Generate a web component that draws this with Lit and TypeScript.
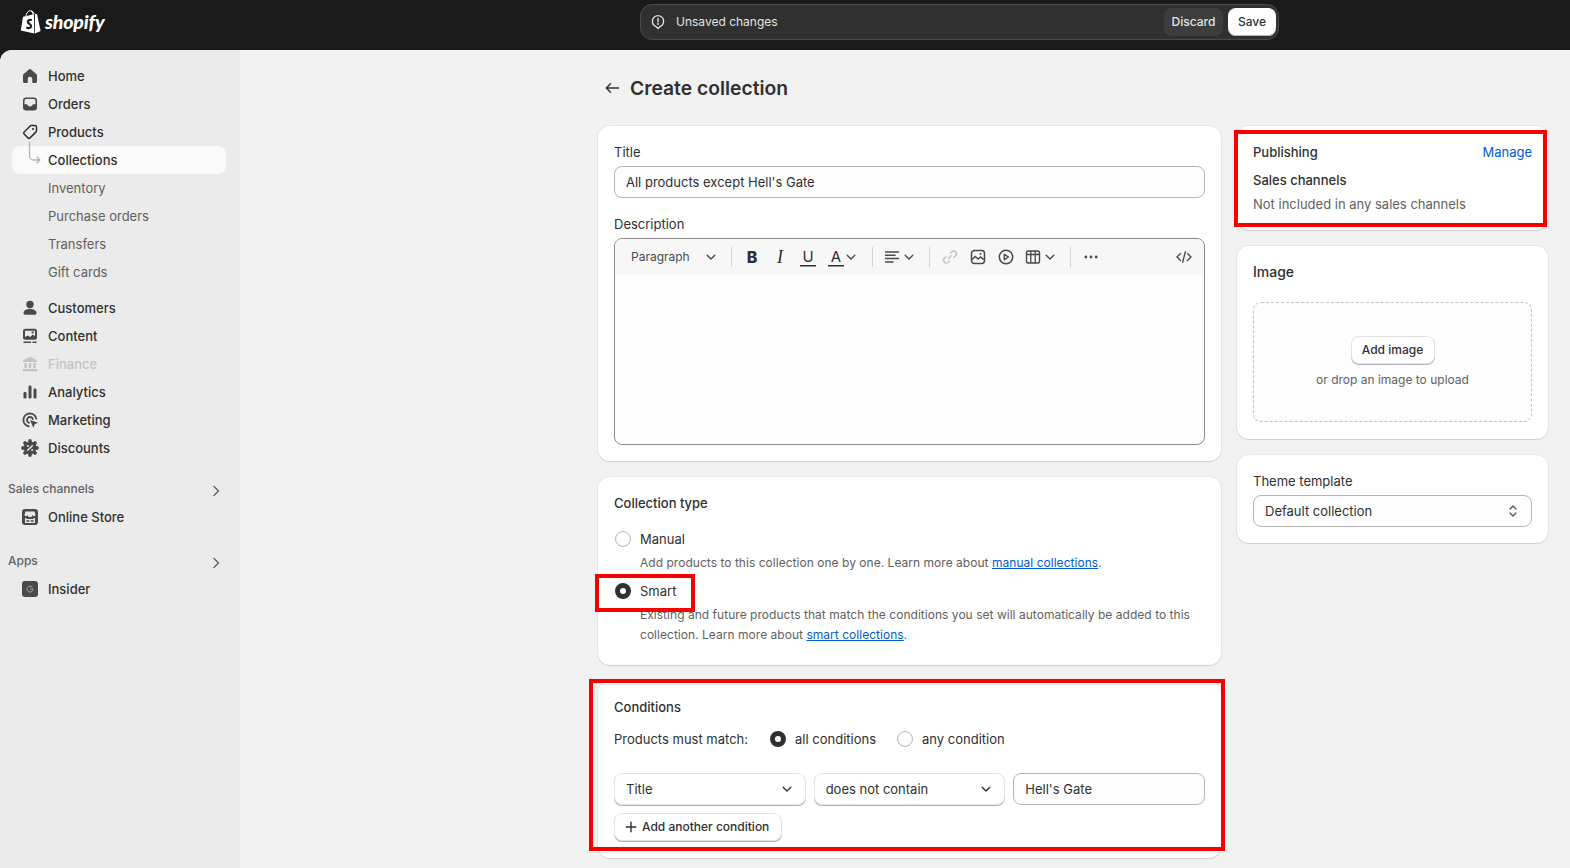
import { LitElement, css, html, svg } from 'lit';
import { customElement } from 'lit/decorators.js';

const icon = (body: unknown, size = 20) => html`<svg class="ico" width=${size} height=${size} viewBox="0 0 20 20">${body}</svg>`;

const chevronDown = html`<svg class="chev" width="14" height="14" viewBox="0 0 14 14"><path d="M3.2 5.2 7 9l3.8-3.8" fill="none" stroke="currentColor" stroke-width="1.4" stroke-linecap="round" stroke-linejoin="round"/></svg>`;
const chevronRight = html`<svg width="16" height="16" viewBox="0 0 16 16"><path d="M6 3.5 10.5 8 6 12.5" fill="none" stroke="#616161" stroke-width="1.4" stroke-linecap="round" stroke-linejoin="round"/></svg>`;

// knobs round the discount badge
const badgeKnobs = [0, 45, 90, 135, 180, 225, 270, 315].map((deg) => svg`<circle cx="10" cy="3" r="1.900" fill="currentColor" transform="rotate(${deg} 10 10)"/>`);

const navIcons: Record<string, unknown> = {
  home: svg`<path fill="currentColor" d="M9.2 3.3a1.2 1.2 0 0 1 1.6 0l5.5 4.7c.45.35.7.9.7 1.45v6.05a1.5 1.5 0 0 1-1.5 1.5H13a.75.75 0 0 1-.75-.75V13a2.25 2.25 0 0 0-4.5 0v3.25A.75.75 0 0 1 7 17H4.500A1.500 1.500 0 0 1 3 15.500V9.450c0-.55.25-1.100.7-1.450z"/>`,
  orders: svg`<rect x="3.75" y="4.25" width="12.5" height="11.500" rx="2.500" fill="none" stroke="currentColor" stroke-width="1.500"/><path fill="currentColor" d="M3.500 10.200h3.700c.3 1.500 1.400 2.200 2.800 2.200s2.500-.7 2.800-2.200h3.700v3.300a2.500 2.500 0 0 1-2.500 2.500H6a2.500 2.500 0 0 1-2.500-2.500z"/>`,
  products: svg`<path fill="none" stroke="#303030" stroke-width="1.500" stroke-linejoin="round" d="M11.200 3.500H15A1.500 1.500 0 0 1 16.500 5v3.800c0 .4-.16.78-.44 1.060l-6 6a1.500 1.500 0 0 1-2.120 0l-3.800-3.800a1.500 1.500 0 0 1 0-2.120l6-6c.28-.28.66-.44 1.060-.44z"/><circle cx="13" cy="7" r="1.100" fill="#303030"/>`,
  customers: svg`<circle cx="10" cy="6.500" r="3.700" fill="currentColor"/><path fill="currentColor" d="M3.500 15c0-2.500 2.900-4 6.500-4s6.500 1.500 6.500 4c0 1-.8 1.750-1.500 1.750H5c-.7 0-1.500-.75-1.500-1.750z"/>`,
  content: svg`<rect x="3" y="2.800" width="14" height="11" rx="2.200" fill="currentColor"/><path fill="#ebebeb" d="M5 4.800h10v5.400l-2.200-1.700-2.600 2.500-2.400-1.600L5 11z"/><circle cx="12.600" cy="6.400" r="1.100" fill="currentColor"/><path d="M4 16.200h6.500M13 16.200h3" stroke="currentColor" stroke-width="1.500" stroke-linecap="round"/>`,
  finance: svg`<path fill="currentColor" d="M10 2.800l7 3.500V8H3V6.300zM4.300 9h2.400v5H4.300zM8.800 9h2.400v5H8.800zM13.300 9h2.400v5h-2.400zM3 15h14v2.200H3z"/>`,
  analytics: svg`<g fill="currentColor"><rect x="3.500" y="10" width="3" height="6.500" rx="1.200"/><rect x="8.500" y="3.500" width="3" height="13" rx="1.200"/><rect x="13.500" y="6.500" width="3" height="10" rx="1.200"/></g>`,
  marketing: svg`<g fill="none" stroke="currentColor" stroke-width="1.900" stroke-linecap="round"><path d="M16.300 8.600A6.500 6.500 0 1 0 8.600 16.300"/><path d="M12.800 9A3 3 0 1 0 9 12.800"/></g><path fill="currentColor" d="M10 10l8 2.800-3.300 1.400-1.400 3.500z"/>`,
  discounts: svg`${badgeKnobs}<circle cx="10" cy="10" r="6.400" fill="currentColor"/><path d="M12.300 7.700l-4.600 4.600" stroke="#ebebeb" stroke-width="1.400" stroke-linecap="round"/><circle cx="7.900" cy="8" r="1" fill="#ebebeb"/><circle cx="12.100" cy="12" r="1" fill="#ebebeb"/>`,
  store: svg`<rect x="2" y="2" width="16" height="16" rx="3.200" fill="currentColor"/><path fill="#ebebeb" d="M5.500 4.500h9l1 3.200a1.700 1.700 0 0 1-3.300.4 1.700 1.700 0 0 1-4.400 0 1.700 1.700 0 0 1-3.300-.4z"/><path fill="none" stroke="#ebebeb" stroke-width="1.300" d="M5.700 11v4.400h8.600V11M5.700 12.700h8.600M10 12.700v2.700"/>`,
  insider: svg`<rect x="2" y="2" width="16" height="16" rx="3" fill="currentColor"/><path fill="none" stroke="#b0b0b0" stroke-width=".9" d="M12.300 8.200A3 3 0 1 0 13 10h-3"/>`,
};

const tool = {
  image: svg`<rect x="3.500" y="3.500" width="13" height="13" rx="3" fill="none" stroke="currentColor" stroke-width="1.500"/><path d="M4 12.500l3.200-3 3 2.600 2.300-2.100 3.300 2.600" fill="none" stroke="currentColor" stroke-width="1.500"/><circle cx="12.500" cy="7" r="1" fill="currentColor"/>`,
  play: svg`<circle cx="10" cy="10" r="6.700" fill="none" stroke="currentColor" stroke-width="1.500"/><path d="M8.300 7.300v5.400l4.200-2.700z" fill="none" stroke="currentColor" stroke-width="1.400" stroke-linejoin="round"/>`,
  table: svg`<rect x="3.500" y="4" width="13" height="12" rx="1.800" fill="none" stroke="currentColor" stroke-width="1.400"/><path d="M3.500 7.500h13M7.800 4v12M12.200 4v12" stroke="currentColor" stroke-width="1.300" fill="none"/>`,
  align: svg`<path d="M3.500 5h13M3.500 8.300h9.500M3.500 11.600h13M3.500 15h7.500" stroke="currentColor" stroke-width="1.500" stroke-linecap="round" fill="none"/>`,
  link: svg`<g fill="none" stroke="#c4c4c4" stroke-width="1.500" stroke-linecap="round"><path d="M8.500 11.500 11.500 8.500"/><path d="M10.500 6l1.500-1.500a2.800 2.800 0 0 1 3.900 3.900L14 10.200"/><path d="M9.500 14l-1.500 1.500a2.800 2.800 0 0 1-3.900-3.900L6 9.800"/></g>`,
  dots: svg`<g fill="currentColor"><circle cx="4.800" cy="10" r="1.400"/><circle cx="10" cy="10" r="1.400"/><circle cx="15.200" cy="10" r="1.400"/></g>`,
  code: svg`<path d="M6.500 6.500 3 10l3.500 3.500M13.500 6.500 17 10l-3.500 3.500M11.300 4.800l-2.600 10.400" fill="none" stroke="currentColor" stroke-width="1.400" stroke-linecap="round" stroke-linejoin="round"/>`,
};

type NavItem = { label: string; icon?: string; cls?: string };

const mainNav: NavItem[] = [
  { label: 'Home', icon: 'home' },
  { label: 'Orders', icon: 'orders' },
  { label: 'Products', icon: 'products' },
  { label: 'Collections', cls: 'active' },
  { label: 'Inventory', cls: 'sub' },
  { label: 'Purchase orders', cls: 'sub' },
  { label: 'Transfers', cls: 'sub' },
  { label: 'Gift cards', cls: 'sub' },
];

const secondNav: NavItem[] = [
  { label: 'Customers', icon: 'customers' },
  { label: 'Content', icon: 'content' },
  { label: 'Finance', icon: 'finance', cls: 'off' },
  { label: 'Analytics', icon: 'analytics' },
  { label: 'Marketing', icon: 'marketing' },
  { label: 'Discounts', icon: 'discounts' },
];

@customElement('app-root')
export class AppRoot extends LitElement {
  static styles = css`
    :host {
      display: block;
      height: 868px;
      overflow: hidden;
      background: #1a1a1a;
      font-family: Inter, 'Noto Sans', sans-serif;
      font-size: 13px;
      line-height: 20px;
      font-weight: 430;
      color: #303030;
    }

    .topbar {
      display: grid;
      grid-template-columns: 640px 639px 1fr;
      height: 50px;
      align-items: start;
    }

    .logo {
      display: flex;
      align-items: center;
      gap: 4px;
      padding: 10px 0 0 20px;
      color: #fff;
    }

    .wordmark {
      font-family: Lato, sans-serif;
      font-style: italic;
      font-weight: 900;
      font-size: 19.5px;
      line-height: 24px;
      letter-spacing: -0.15px;
      margin-top: -1px;
    }

    .savebar {
      display: flex;
      align-items: center;
      height: 36px;
      box-sizing: border-box;
      margin-top: 4px;
      padding: 0 2px 0 9px;
      background: #303030;
      border: 1px solid #4a4a4a;
      border-radius: 12px;
      color: #e3e3e3;
      font-size: 12px;
    }

    .savebar .msg {
      margin-left: 10px;
      flex: 1;
    }

    .discard,
    .save {
      height: 28px;
      display: flex;
      align-items: center;
      justify-content: center;
      border-radius: 8px;
      font-weight: 500;
    }

    .discard {
      width: 59px;
      background: #3d3d3d;
      margin-right: 5px;
    }

    .save {
      width: 48px;
      background: #fff;
      color: #303030;
      box-shadow: inset 0 -1px 0 #b5b5b5;
    }

    .frame {
      display: flex;
      height: 818px;
      background: #f1f1f1;
      border-radius: 12px 0 0 0;
      overflow: hidden;
    }

    .sidebar {
      width: 240px;
      flex: none;
      box-sizing: border-box;
      padding-top: 12px;
      background: #ebebeb;
    }

    .group {
      margin-bottom: 8px;
    }

    .row {
      position: relative;
      display: flex;
      align-items: center;
      gap: 8px;
      height: 28px;
      width: 214px;
      margin-left: 12px;
      padding-left: 8px;
      box-sizing: border-box;
      border-radius: 8px;
      font-weight: 450;
      color: #303030;
    }

    .row .ico {
      color: #4a4a4a;
      flex: none;
    }

    .row.sub span,
    .row.active span {
      margin-left: 28px;
    }

    .row.sub {
      color: #616161;
      font-weight: 430;
    }

    .row.active {
      background: #fafafa;
      font-weight: 550;
    }

    .row.off {
      color: #c4c4c4;
    }

    .row.off .ico {
      color: #c4c4c4;
    }

    .connector {
      position: absolute;
      left: 0;
      top: -6px;
    }

    .section {
      display: flex;
      align-items: center;
      justify-content: space-between;
      height: 28px;
      padding: 0 16px 0 8px;
      font-size: 12px;
      font-weight: 500;
      color: #616161;
    }

    .section svg {
      margin-top: 4px;
    }

    .spaced {
      margin-top: 13px;
    }

    .spaced-more {
      margin-top: 16px;
    }

    .main {
      flex: 1;
      padding: 20px 0 0 358px;
    }

    .heading {
      display: flex;
      align-items: center;
      height: 36px;
      gap: 10px;
      margin-bottom: 20px;
      font-size: 19.300px;
      font-weight: 600;
      line-height: 24px;
    }

    .heading svg {
      margin-left: 6px;
    }

    .columns {
      display: flex;
      gap: 16px;
      align-items: flex-start;
    }

    .col-left {
      width: 623px;
      display: grid;
      gap: 16px;
    }

    .col-right {
      width: 311px;
      display: grid;
      gap: 16px;
    }

    .card {
      position: relative;
      background: #fff;
      border-radius: 12px;
      padding: 16px;
      box-shadow: 0 1px 1px rgba(0, 0, 0, 0.1), 0 0 0 1px rgba(0, 0, 0, 0.04);
    }

    .mark {
      position: absolute;
      box-sizing: border-box;
      border: 4px solid #f60000;
      pointer-events: none;
    }

    .mark-publishing {
      left: -3px;
      right: 1px;
      top: 4px;
      bottom: 3px;
    }

    .mark-smart {
      left: -3px;
      top: 97px;
      width: 100px;
      height: 38px;
    }

    .mark-conditions {
      left: -9px;
      right: -4px;
      top: -2px;
      bottom: 7px;
    }

    .title {
      font-weight: 550;
    }

    .big-title {
      font-size: 14px;
      font-weight: 500;
    }

    .muted {
      color: #616161;
    }

    .label {
      margin-bottom: 4px;
    }

    .field {
      display: flex;
      align-items: center;
      height: 32px;
      box-sizing: border-box;
      padding: 0 11px;
      background: #fdfdfd;
      border: 1px solid #b5b5b5;
      border-radius: 8px;
    }

    .between {
      justify-content: space-between;
    }

    .mt16 {
      margin-top: 16px;
    }

    .editor {
      height: 207px;
      box-sizing: border-box;
      border: 1px solid #8a8a8a;
      border-radius: 8px;
      overflow: hidden;
      background: #fdfdfd;
    }

    .toolbar {
      display: flex;
      align-items: center;
      height: 36px;
      padding: 0 6px 0 8px;
      background: #f7f7f7;
      color: #4a4a4a;
    }

    .para {
      width: 103px;
      height: 28px;
      box-sizing: border-box;
      display: flex;
      align-items: center;
      justify-content: space-between;
      padding: 0 8px;
      font-size: 12px;
      color: #4a4a4a;
    }

    .sep {
      width: 1px;
      height: 20px;
      margin: 0 6px;
      background: #d4d4d4;
      flex: none;
    }

    .sep.first {
      margin-left: 5px;
    }

    .tb {
      width: 28px;
      height: 28px;
      display: flex;
      align-items: center;
      justify-content: center;
      flex: none;
    }

    .tb.wide {
      width: 44px;
      justify-content: flex-start;
      box-sizing: border-box;
    }

    .pad3 {
      padding-left: 3px;
    }

    .pad6 {
      padding-left: 6px;
    }

    .code {
      margin-left: auto;
    }

    .glyph {
      width: 16px;
      text-align: center;
      font-size: 16px;
      line-height: 16px;
      color: #303030;
    }

    .glyph.b {
      font-weight: 800;
    }

    .glyph.i {
      font-family: 'Liberation Serif', serif;
      font-style: italic;
      font-size: 18px;
    }

    .glyph.u,
    .glyph.a {
      font-size: 15px;
      box-shadow: 0 1.500px 0 #303030;
      font-weight: 400;
    }

    .radio-row {
      display: flex;
      align-items: center;
      gap: 9px;
      height: 20px;
    }

    .radio {
      width: 16px;
      height: 16px;
      margin-left: 1px;
      box-sizing: border-box;
      flex: none;
      border-radius: 50%;
      border: 1px solid #b5b5b5;
      background: #fdfdfd;
    }

    .radio.on {
      border: 5px solid #303030;
      background: #fff;
    }

    .help {
      padding-left: 26px;
      color: #616161;
      margin-top: 4px;
      font-size: 12px;
      letter-spacing: 0.03px;
    }

    .help a {
      color: #005bd3;
      text-decoration: underline;
    }

    .type-card {
      padding-bottom: 20px;
    }

    .cond-card {
      padding-bottom: 17px;
    }

    .match {
      display: flex;
      align-items: center;
      height: 20px;
      margin-top: 12px;
      gap: 20px;
    }

    .match > span {
      margin-right: 1px;
    }

    .cond-row {
      display: grid;
      grid-template-columns: repeat(3, 1fr);
      gap: 8px;
      margin-top: 24px;
    }

    .select {
      border-color: #e3e3e3;
      background: #fff;
      box-shadow: 0 1px 0 #b5b5b5;
    }

    .btn {
      display: inline-flex;
      align-items: center;
      height: 28px;
      box-sizing: border-box;
      padding: 0 11px;
      background: #fff;
      border: 1px solid #e3e3e3;
      border-radius: 8px;
      box-shadow: 0 1px 0 #b5b5b5;
      font-weight: 450;
      font-size: 12px;
      white-space: nowrap;
    }

    .add {
      display: flex;
      width: 168px;
      margin-top: 8px;
      padding: 0 8px;
      gap: 3px;
    }

    .spread {
      display: flex;
      justify-content: space-between;
    }

    .spread a {
      color: #005bd3;
    }

    .mt8 {
      margin-top: 8px;
    }

    .mt4 {
      margin-top: 4px;
    }

    .image-card {
      padding-bottom: 17px;
    }

    .drop {
      height: 120px;
      margin-top: 20px;
      padding-top: 2px;
      box-sizing: border-box;
      display: flex;
      flex-direction: column;
      align-items: center;
      justify-content: center;
      gap: 6px;
      background: #fdfdfd;
      border: 1px dashed #c4c4c4;
      border-radius: 8px;
      font-size: 12px;
      color: #616161;
    }

    .drop .btn {
      color: #303030;
      width: 84px;
      justify-content: center;
      padding: 0;
    }
  `;

  private renderRow(item: NavItem) {
    return html`<div class="row ${item.cls ?? ''}">
      ${item.icon ? icon(navIcons[item.icon]) : ''}
      ${item.cls === 'active'
        ? html`<svg class="connector" width="32" height="28" viewBox="0 0 32 28"><path d="M17.500 2v14a4 4 0 0 0 4 4H28M25 17l3 3-3 3" fill="none" stroke="#b5b5b5" stroke-width="1.300" stroke-linecap="round" stroke-linejoin="round"/></svg>`
        : ''}
      <span>${item.label}</span>
    </div>`;
  }

  private renderToolbar() {
    return html`<div class="toolbar">
      <div class="para"><span>Paragraph</span>${chevronDown}</div>
      <div class="sep first"></div>
      <div class="tb"><span class="glyph b">B</span></div>
      <div class="tb"><span class="glyph i">I</span></div>
      <div class="tb"><span class="glyph u">U</span></div>
      <div class="tb wide pad6"><span class="glyph a">A</span>${chevronDown}</div>
      <div class="sep"></div>
      <div class="tb wide pad3">${icon(tool.align)}${chevronDown}</div>
      <div class="sep"></div>
      <div class="tb">${icon(tool.link)}</div>
      <div class="tb">${icon(tool.image)}</div>
      <div class="tb">${icon(tool.play)}</div>
      <div class="tb wide pad3">${icon(tool.table)}${chevronDown}</div>
      <div class="sep"></div>
      <div class="tb">${icon(tool.dots)}</div>
      <div class="tb code">${icon(tool.code)}</div>
    </div>`;
  }

  render() {
    return html`
      <header class="topbar">
        <div class="logo">
          <svg width="21" height="24" viewBox="0 0 21 24">
            <path fill="#fff" d="M.8 20.500 3 6.800 14 4.200l.3 19.300z"/>
            <path fill="#fff" d="M15 4l2 .1 3.600 17-5.600 2.400z"/>
            <path fill="none" stroke="#fff" stroke-width="1" d="M5.800 6.500C6.300 3 8.300.7 10.300.7c2 0 2.700 2.200 2.700 4.300M10.800 1c2 0 3 1.500 3.400 3.200"/>
            <path fill="none" stroke="#1a1a1a" stroke-width="2.100" d="M11.700 10.200c-1-.6-3.700-.6-3.900 1.300-.2 2.300 3.400 2.300 3.300 4.700-.1 2.300-2.800 2.300-4.800 1.100"/>
          </svg>
          <span class="wordmark">shopify</span>
        </div>
        <div class="savebar">
          <svg width="16" height="16" viewBox="0 0 16 16"><path d="M8 14.500 6.200 12.700A5.700 5.700 0 1 1 9.800 12.700z" fill="none" stroke="#e3e3e3" stroke-width="1.300" stroke-linejoin="round"/><path d="M8 4.600v3.300" stroke="#e3e3e3" stroke-width="1.400" stroke-linecap="round"/><circle cx="8" cy="10" r=".9" fill="#e3e3e3"/></svg>
          <span class="msg">Unsaved changes</span>
          <div class="discard">Discard</div>
          <div class="save">Save</div>
        </div>
      </header>

      <div class="frame">
        <nav class="sidebar">
          <div class="group">${mainNav.map((item) => this.renderRow(item))}</div>
          <div>${secondNav.map((item) => this.renderRow(item))}</div>
          <div class="section spaced"><span>Sales channels</span>${chevronRight}</div>
          ${this.renderRow({ label: 'Online Store', icon: 'store' })}
          <div class="section spaced-more"><span>Apps</span>${chevronRight}</div>
          ${this.renderRow({ label: 'Insider', icon: 'insider' })}
        </nav>

        <main class="main">
          <div class="heading">
            <svg width="16" height="16" viewBox="0 0 16 16"><path d="M14.500 8H2.500M6.500 3.800 2.300 8l4.200 4.200" fill="none" stroke="#303030" stroke-width="1.400" stroke-linecap="round" stroke-linejoin="round"/></svg>
            <span>Create collection</span>
          </div>

          <div class="columns">
            <div class="col-left">
              <section class="card">
                <div class="label">Title</div>
                <div class="field">All products except Hell's Gate</div>
                <div class="label mt16">Description</div>
                <div class="editor">${this.renderToolbar()}</div>
              </section>

              <section class="card type-card">
                <div class="title">Collection type</div>
                <div class="radio-row mt16"><span class="radio"></span>Manual</div>
                <div class="help">Add products to this collection one by one. Learn more about <a>manual collections</a>.</div>
                <div class="radio-row mt8"><span class="radio on"></span>Smart</div>
                <div class="help">Existing and future products that match the conditions you set will automatically be added to this collection. Learn more about <a>smart collections</a>.</div>
                <div class="mark mark-smart"></div>
              </section>

              <section class="card cond-card">
                <div class="title">Conditions</div>
                <div class="match">
                  <span>Products must match:</span>
                  <div class="radio-row"><span class="radio on"></span>all conditions</div>
                  <div class="radio-row"><span class="radio"></span>any condition</div>
                </div>
                <div class="cond-row">
                  <div class="field select between"><span>Title</span>${chevronDown}</div>
                  <div class="field select between"><span>does not contain</span>${chevronDown}</div>
                  <div class="field"><span>Hell's Gate</span></div>
                </div>
                <div class="btn add">
                  <svg width="16" height="16" viewBox="0 0 16 16"><path d="M8 3.200v9.600M3.200 8h9.600" stroke="#303030" stroke-width="1.400" stroke-linecap="round"/></svg>
                  <span>Add another condition</span>
                </div>
                <div class="mark mark-conditions"></div>
              </section>
            </div>

            <div class="col-right">
              <section class="card">
                <div class="spread"><span class="title">Publishing</span><a>Manage</a></div>
                <div class="title mt8">Sales channels</div>
                <div class="muted mt4">Not included in any sales channels</div>
                <div class="mark mark-publishing"></div>
              </section>

              <section class="card image-card">
                <div class="big-title">Image</div>
                <div class="drop">
                  <div class="btn">Add image</div>
                  <div>or drop an image to upload</div>
                </div>
              </section>

              <section class="card">
                <div class="label">Theme template</div>
                <div class="field between">
                  <span>Default collection</span>
                  <svg width="14" height="16" viewBox="0 0 14 16"><path d="M4 6l3-3 3 3M4 10l3 3 3-3" fill="none" stroke="#4a4a4a" stroke-width="1.200" stroke-linecap="round" stroke-linejoin="round"/></svg>
                </div>
              </section>
            </div>
          </div>
        </main>
      </div>
    `;
  }
}
